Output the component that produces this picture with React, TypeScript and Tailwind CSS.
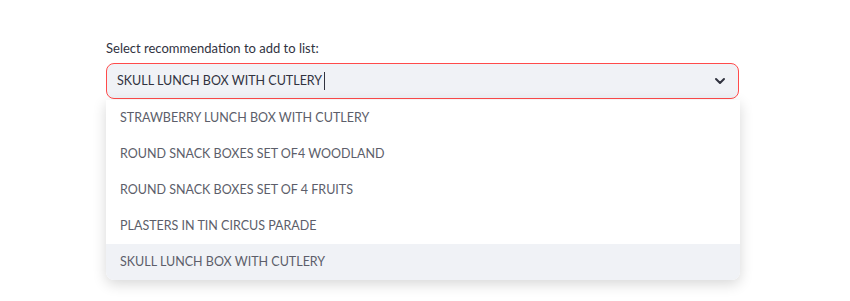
import React from 'react';
import { ChevronDown } from 'lucide-react';

const options = [
    'STRAWBERRY LUNCH BOX WITH CUTLERY',
    'ROUND SNACK BOXES SET OF4 WOODLAND',
    'ROUND SNACK BOXES SET OF 4 FRUITS',
    'PLASTERS IN TIN CIRCUS PARADE',
    'SKULL LUNCH BOX WITH CUTLERY',
];

const App: React.FC = () => {
    const selected = 'SKULL LUNCH BOX WITH CUTLERY';

    return (
        <div className="w-[850px] h-[301px] bg-white font-['Lato','Noto_Sans',sans-serif] text-[#31333f]">
            <div className="pl-[106px] pr-[111px] pt-[40px]">
                {/* Label */}
                <div className="text-[13px] leading-[17px] mb-[6px]">Select recommendation to add to list:</div>

                {/* Select box */}
                <div className="relative">
                    <div className="h-[36px] flex items-center justify-between rounded-[8px] border border-[#ff4b4b] bg-[#f0f2f6] pl-[10px] pr-[10px]">
                        <div className="flex items-center text-[12.5px]">
                            <span>{selected}</span>
                            <span className="ml-[2px] w-px h-[18px] bg-[#31333f]" />
                        </div>
                        <ChevronDown className="h-4 w-4 text-[#31333f]" strokeWidth={3} />
                    </div>

                    {/* Dropdown menu */}
                    <div className="absolute left-0 right-[-1px] top-[37px] bg-white rounded-b-[8px] shadow-[0_4px_14px_rgba(0,0,0,0.16)] overflow-hidden">
                        {options.map((opt) => (
                            <div
                                key={opt}
                                className={`h-[36px] flex items-center pl-[14px] text-[12.5px] text-[#5c5e6a] ${opt === selected ? 'bg-[#f0f2f6]' : ''}`}
                            >
                                {opt}
                            </div>
                        ))}
                    </div>
                </div>
            </div>
        </div>
    );
};

export default App;
